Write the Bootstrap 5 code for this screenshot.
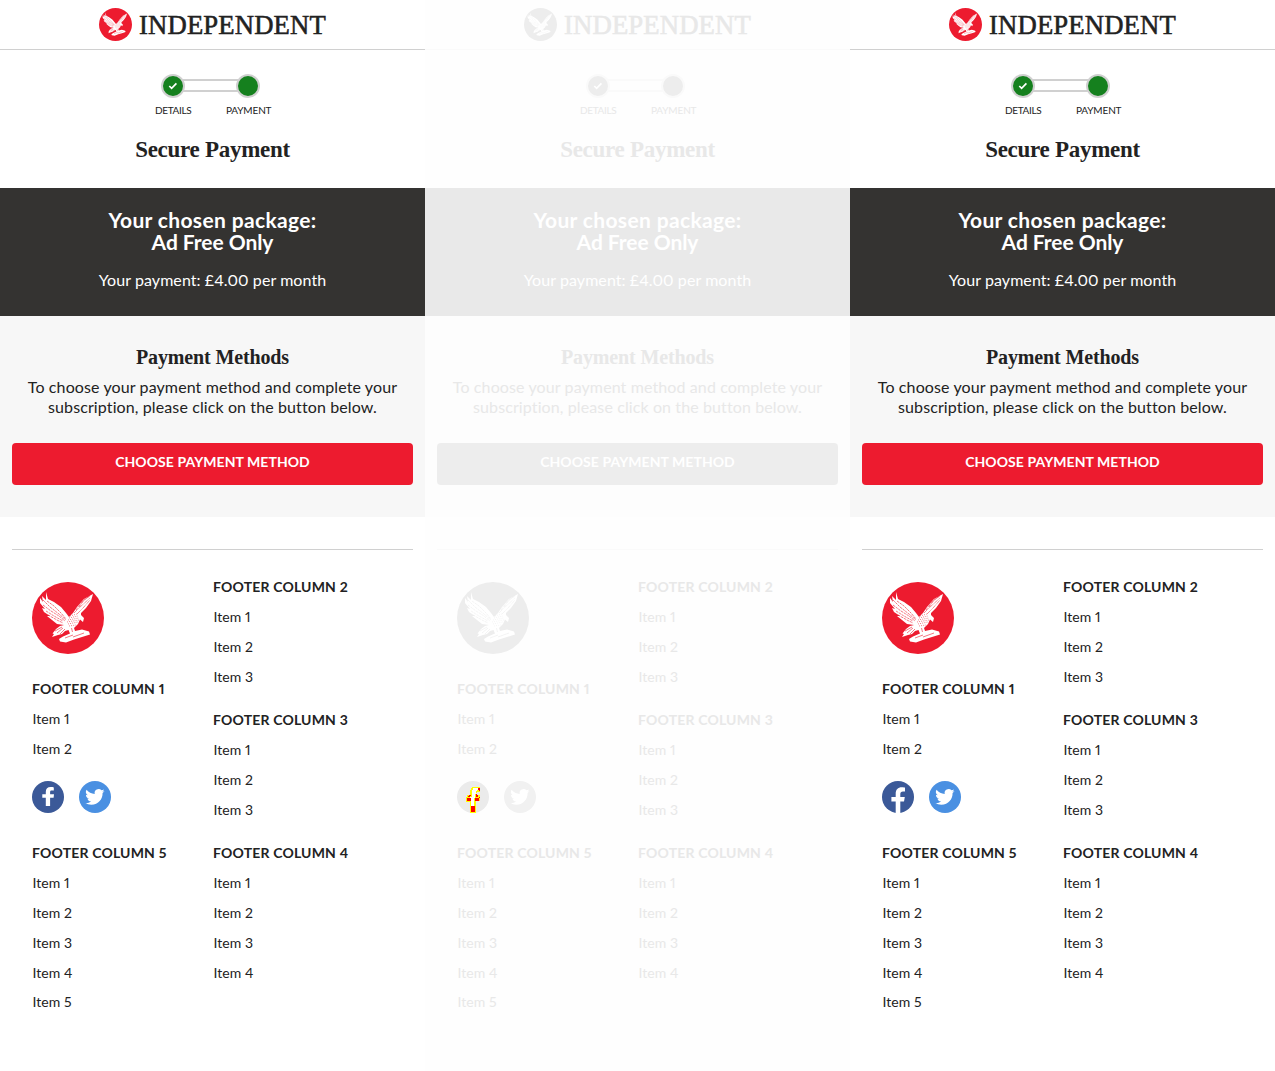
<!DOCTYPE html>
<html lang="en">
<head>
<meta charset="utf-8">
<meta name="viewport" content="width=device-width, initial-scale=1">
<title>Independent - Secure Payment</title>
<link href="https://cdn.jsdelivr.net/npm/bootstrap@5.3.0/dist/css/bootstrap.min.css" rel="stylesheet">
<style>
body{font-family:Lato,"Open Sans",sans-serif;font-variant-numeric:proportional-nums;color:#222;background:#fff;overflow:hidden}
.pane{--ink:#222;--red:#ed1b2f;--rule:#d0d0d0;--dark:#343331;--soft:#f7f7f7;--green:#15801e;--fb:#3b5998;--tw:#4a90e2;width:425px;height:1071px;color:var(--ink)}
.pane-faded{--ink:#e8e8e8;--red:#ededed;--rule:#fafafa;--dark:#e9e9e9;--soft:#fdfdfd;--green:#ededed;--fb:#ebebeb;--tw:#f1f1f1;background:#fefefe}
.serif{font-family:"Liberation Serif",serif;font-weight:700}
.masthead{height:50px;border-bottom:1px solid var(--rule);padding-left:99px}
.wordmark{font-family:"Liberation Serif",serif;font-size:26.7px;line-height:33px;margin-left:7px;padding-top:1px;letter-spacing:.15px;-webkit-text-stroke:.55px var(--ink)}
.steps{height:138px;padding-top:24px}
.track{width:99px;height:24px;margin-left:161px}
.dot{width:24px;height:24px;border-radius:50%;background:var(--green);border:2px solid var(--rule)}
.bar{height:13px;flex:1;border:solid var(--rule);border-width:2px 0;margin:0 -2px 1px}
.labels{font-size:10px;line-height:12px;margin-top:6px}
.labels span:first-child{margin-left:155px;width:71px;letter-spacing:-.35px}
.labels span:last-child{letter-spacing:-.15px}
.title{font-size:23px;line-height:28px;margin:20px 0 0;letter-spacing:-.28px}
.package{height:128px;background:var(--dark);color:#fff;padding-top:21px}
.package h2{font-size:21px;line-height:22px;font-weight:700;margin:0 0 17px;letter-spacing:.35px}
.package h2 span{letter-spacing:-.05px}
.package p{font-size:16px;line-height:20px;letter-spacing:.07px}
.methods{height:201px;background:var(--soft);padding:29px 12px 0}
.methods h3{font-size:20px;line-height:24px;margin:0 0 8px;letter-spacing:-.13px}
.methods p{font-size:16px;line-height:20px;margin:0 0 26px;letter-spacing:.11px}
.cta,.cta:hover{--bs-btn-hover-bg:var(--red);background:var(--red);color:#fff;border:0;height:42px;border-radius:4px;font-weight:700;font-size:14px;line-height:20px;padding:0 0 4px;letter-spacing:.06px}
.foot{margin:32px 12px 0;border-top:1px solid var(--rule);padding:22px 20px 0}
.foot-left{width:181px;padding-top:10px}
.foot h4{font-size:14px;line-height:30px;font-weight:700;margin:0;letter-spacing:.18px}
.foot li{font-size:14px;line-height:30px;height:30px;letter-spacing:.05px;padding-left:.5px}
.foot li:nth-child(5){margin-top:-1px}
.foot ul{margin:0 0 13px}
.foot .crest{margin-bottom:20px}
.foot .brand-ul{margin-bottom:17px}
.social{gap:15px;margin-bottom:25px}
svg{display:block;flex:none}
</style>
<script src="https://cdn.jsdelivr.net/npm/bootstrap@5.3.0/dist/js/bootstrap.bundle.min.js"></script>
</head>
<body>
<svg width="0" height="0" class="position-absolute">
  <symbol id="eagle" viewBox="0 0 72 72">
    <circle cx="36" cy="36" r="36" fill="var(--red)"/>
    <path fill="#fff" d="M14 10L16 17L22 20L29 25L34 31L37 35L41 31L45 25L52 17L61 12L59 19L54 26L49 31L49 33L52 36L51 40L48 37.500L46 42L42 46L43 49L50 47.500L57 49.500L58 52.500L50 55L42 57.500L34 60.500L28 59.500L27 57L31 54.500L38 51.500L36.500 48L33 49L30 52L26 53L20 55L22 52L20.500 51.500L24 47L28 44L32 43L25 42L20 38L15 34L18 34L12 30L10 26L13 27L8 21L8 16L11 20L10 14L14 18z"/>
    <g stroke="var(--red)" fill="none">
      <g stroke-width=".6" stroke-dasharray="2.500 .8">
        <path d="M11 18l7 7 9 7 7 6M11 23l8 6 8 5 6 5M14 29l8 5 9 5M16 33l9 5 6 3M15 19l7 5 7 7 5 6"/>
      </g>
      <path stroke-width=".9" stroke-dasharray=".8 .9" d="M42 31l5-5 11-10M45 32l6-6 7-8M44 28l5-7 8-7M47 25l5-7 6-4"/>
      <path stroke-width=".7" stroke-dasharray=".8 1.400" d="M37 36l9-2M36 38l11-2M35 40l12-2M36 42l10-2M37 44l7-1M38 34l7-2"/>
      <path stroke-width=".6" d="M23 49l7-4M25 51l6-5M28 52l5-5M33 56l8-3M41 55l11-4M39.500 46l1 4"/>
    </g>
  </symbol>
  <symbol id="bird" viewBox="0 0 32 32">
    <circle cx="16" cy="16" r="16" fill="var(--tw)"/>
    <path transform="translate(6.2 5.7) scale(1.21)" fill="#fff" d="M5.026 15c6.038 0 9.341-5.003 9.341-9.334 0-.14 0-.282-.006-.422A6.685 6.685 0 0 0 16 3.542a6.658 6.658 0 0 1-1.889.518 3.301 3.301 0 0 0 1.447-1.817 6.533 6.533 0 0 1-2.087.793A3.286 3.286 0 0 0 7.875 6.03a9.325 9.325 0 0 1-6.767-3.429 3.289 3.289 0 0 0 1.018 4.382A3.323 3.323 0 0 1 .64 6.575v.045a3.288 3.288 0 0 0 2.632 3.218 3.203 3.203 0 0 1-.865.115 3.23 3.23 0 0 1-.614-.057 3.283 3.283 0 0 0 3.067 2.277A6.588 6.588 0 0 1 .78 13.58a6.32 6.32 0 0 1-.78-.045A9.344 9.344 0 0 0 5.026 15z"/>
  </symbol>
  <symbol id="fb-short" viewBox="0 0 32 32">
    <circle cx="16" cy="16" r="16" fill="var(--fb)"/>
    <path fill="#fff" d="M13.8 25V16.8h-3.5v-3.6h3.5v-2.200c0-3.200 1.700-4.900 4.800-4.900 1.400 0 2.600.2 3.200.3v3.200h-2.100c-1.300 0-1.600.7-1.600 1.700v1.900H22l-.4 3.600h-3.500V25z"/>
  </symbol>
  <symbol id="fb-tall" viewBox="0 0 32 32">
    <circle cx="16" cy="16" r="16" fill="var(--fb)"/>
    <path fill="#fff" d="M13.700 32V20.600H9.400V16h4.300v-3.400c0-4.100 2.300-6.400 6-6.400 1.800 0 3.300.3 3.300.3v4h-2c-1.900 0-2.700 1.100-2.700 2.400V16h4.500l-.8 4.600h-3.700V32z"/>
  </symbol>
  <symbol id="fb-delta" viewBox="0 0 32 32">
    <circle cx="16" cy="16" r="16" fill="var(--fb)"/>
    <g shape-rendering="crispEdges">
      <path fill="#ff0" d="M15 6h8v5h-3v1h-1v2h4v6h-4v12h-6V21H9v-5h1v-2h3V9h1V7h1z"/>
      <path fill="#fff" d="M16 7h5v2h-1v1h-1v3h-1v4h-1v8h-3v-8h-1v-1h2V9h1z"/>
      <path fill="#f00" d="M21 7h2v3h-1V9h-1zM12 14h2v1h-1v1h-2v-1h1zM10 17h4v3h-4zM18 17h4v3h-4zM19 13h1v1h1v2h-2zM22 16h1v1h-1zM14 25h4v6h-4z"/>
    </g>
  </symbol>
</svg>
<main class="d-flex" id="panes"></main>
<template id="page">
  <section class="pane flex-shrink-0">
    <header class="masthead d-flex align-items-center">
      <svg width="33" height="33"><use href="#eagle"/></svg><span class="wordmark">INDEPENDENT</span>
    </header>
    <div class="steps">
      <div class="track d-flex align-items-center">
        <span class="dot"><svg width="20" height="20" viewBox="0 0 20 20"><path d="M6.300 10l2.300 2.300 4.800-5" fill="none" stroke="#fff" stroke-width="1.700"/></svg></span>
        <span class="bar"></span><span class="dot"></span>
      </div>
      <div class="labels d-flex"><span>DETAILS</span><span>PAYMENT</span></div>
      <h1 class="title serif text-center">Secure Payment</h1>
    </div>
    <div class="package text-center">
      <h2>Your chosen package:<br><span>Ad Free Only</span></h2>
      <p class="mb-0">Your payment: £4.00 per month</p>
    </div>
    <div class="methods text-center">
      <h3 class="serif">Payment Methods</h3>
      <p>To choose your payment method and complete your<br>subscription, please click on the button below.</p>
      <button class="btn cta w-100 d-block">CHOOSE PAYMENT METHOD</button>
    </div>
    <footer class="foot d-flex">
      <div class="foot-left">
        <svg width="72" height="72" class="crest"><use href="#eagle"/></svg>
        <h4>FOOTER COLUMN 1</h4>
        <ul class="list-unstyled brand-ul"><li>Item 1</li><li>Item 2</li></ul>
        <div class="social d-flex"><svg width="32" height="32"><use class="fb" href="#fb-short"/></svg><svg width="32" height="32"><use href="#bird"/></svg></div>
        <h4>FOOTER COLUMN 5</h4>
        <ul class="list-unstyled"><li>Item 1</li><li>Item 2</li><li>Item 3</li><li>Item 4</li><li>Item 5</li></ul>
      </div>
      <div>
        <h4>FOOTER COLUMN 2</h4>
        <ul class="list-unstyled"><li>Item 1</li><li>Item 2</li><li>Item 3</li></ul>
        <h4>FOOTER COLUMN 3</h4>
        <ul class="list-unstyled"><li>Item 1</li><li>Item 2</li><li>Item 3</li></ul>
        <h4>FOOTER COLUMN 4</h4>
        <ul class="list-unstyled"><li>Item 1</li><li>Item 2</li><li>Item 3</li><li>Item 4</li></ul>
      </div>
    </footer>
  </section>
</template>
<script>
// Baseline, difference and current versions of the page, side by side
["short","delta","tall"].forEach(kind => {
  const copy = document.getElementById("page").content.cloneNode(true);
  copy.querySelector(".fb").setAttribute("href", "#fb-" + kind);
  if (kind === "delta") copy.querySelector(".pane").classList.add("pane-faded");
  document.getElementById("panes").append(copy);
});
</script>
</body>
</html>
